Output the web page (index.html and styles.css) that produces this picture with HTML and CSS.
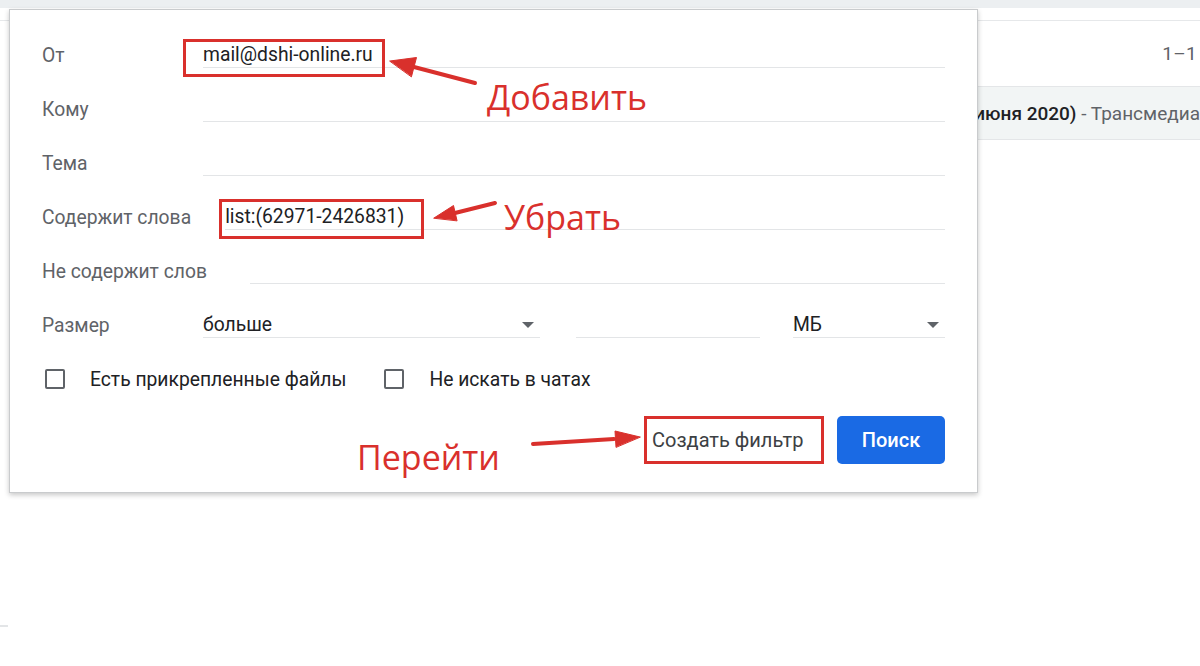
FILE: index.html
```html
<!DOCTYPE html>
<html lang="ru">
<head>
<meta charset="utf-8">
<title>Поиск</title>
<link rel="stylesheet" href="styles.css">
</head>
<body>
<div class="page">
  <div class="topstrip"></div>
  <div class="toolbar"></div>
  <div class="count-row"><span class="count">1–1</span></div>
  <div class="mail-row">
    <span class="mail-subject">июня 2020)</span><span class="mail-snippet">&nbsp;- Трансмедиа</span>
  </div>
  <div class="side-mark"></div>
</div>

<form class="search-dialog">
  <div class="row">
    <span class="label">От</span>
    <div class="field"><span class="value">mail@dshi-online.ru</span></div>
  </div>
  <div class="row">
    <span class="label">Кому</span>
    <div class="field"></div>
  </div>
  <div class="row">
    <span class="label">Тема</span>
    <div class="field"></div>
  </div>
  <div class="row">
    <span class="label label-mid">Содержит слова</span>
    <div class="field"><span class="value">list:(62971-2426831)</span></div>
  </div>
  <div class="row">
    <span class="label label-wide">Не содержит слов</span>
    <div class="field"></div>
  </div>
  <div class="row">
    <span class="label">Размер</span>
    <div class="field select select-op"><span class="value">больше</span><span class="caret"></span></div>
    <div class="field field-num"></div>
    <div class="field select select-unit"><span class="value">МБ</span><span class="caret"></span></div>
  </div>
  <div class="row row-checks">
    <label class="check"><span class="box"></span><span class="check-text">Есть прикрепленные файлы</span></label>
    <label class="check"><span class="box"></span><span class="check-text">Не искать в чатах</span></label>
  </div>
  <div class="actions">
    <button type="button" class="btn btn-text">Создать фильтр</button>
    <button type="button" class="btn btn-primary">Поиск</button>
  </div>
</form>

<div class="mark mark-from"></div>
<div class="mark mark-words"></div>
<div class="mark mark-filter"></div>

<span class="note note-add">Добавить</span>
<span class="note note-remove">Убрать</span>
<span class="note note-go">Перейти</span>

<svg class="arrows" width="1200" height="666" viewBox="0 0 1200 666">
  <g fill="#d9302c" stroke="#d9302c" stroke-linecap="round">
    <line x1="475" y1="83" x2="414" y2="67" stroke-width="4"/>
    <polygon points="390,61 416.5,57.5 411.5,76.5" stroke-width="1"/>
    <line x1="495" y1="203" x2="455" y2="213" stroke-width="4"/>
    <polygon points="434,218 453.5,205.5 457,220.5" stroke-width="1"/>
    <line x1="533" y1="444" x2="614" y2="439" stroke-width="4"/>
    <polygon points="640,437 615,431 616,447" stroke-width="1"/>
  </g>
</svg>
</body>
</html>
```

FILE: styles.css
```css
html, body {
  margin: 0;
  padding: 0;
  background: #ffffff;
}

body {
  width: 1200px;
  height: 666px;
  overflow: hidden;
  position: relative;
  font-family: Roboto, "Liberation Sans", sans-serif;
}

/* background page */
.page {
  display: flex;
  flex-direction: column;
}

.topstrip {
  height: 8px;
  background: #eceff1;
}

.toolbar {
  height: 12px;
  border-bottom: 1px solid #e6e8ea;
}

.count-row {
  height: 65px;
  display: flex;
  align-items: center;
  justify-content: flex-end;
}

.count {
  font-size: 19px;
  color: #5f6368;
  margin-right: 3px;
  letter-spacing: 0.3px;
}

.mail-row {
  height: 52px;
  margin-left: 978px;
  background: #f2f5f5;
  border-top: 1px solid #e4e6e8;
  border-bottom: 1px solid #e4e6e8;
  display: flex;
  align-items: center;
  justify-content: flex-end;
  white-space: nowrap;
  overflow: hidden;
  font-size: 19px;
}

.mail-subject {
  color: #202124;
  font-weight: 500;
  flex: none;
}

.mail-snippet {
  color: #5f6368;
  flex: none;
  margin-right: 0;
}

.side-mark {
  margin-top: 485px;
  width: 8px;
  height: 2px;
  background: #e3e5e7;
}

/* search dialog */
.search-dialog {
  position: absolute;
  left: 9px;
  top: 9px;
  width: 969px;
  box-sizing: border-box;
  background: #ffffff;
  border: 1px solid #c9cbcd;
  box-shadow: 0 2px 5px rgba(0, 0, 0, 0.22);
  padding: 18px 32px 28px 32px;
  margin: 0;
  display: flex;
  flex-direction: column;
}

.row {
  height: 54px;
  display: flex;
  align-items: center;
}

.label {
  flex: none;
  min-width: 161px;
  box-sizing: border-box;
  padding-right: 32px;
  font-size: 19.3px;
  color: #5f6368;
  white-space: nowrap;
}

.label-mid {
  padding-right: 34px;
}

.label-wide {
  padding-right: 43px;
}

.field {
  flex: 1;
  height: 24px;
  border-bottom: 1px solid #e3e5e7;
  display: flex;
  align-items: center;
  font-size: 19.3px;
  color: #202124;
  white-space: nowrap;
}

.value {
  line-height: 24px;
}

.select {
  justify-content: space-between;
}

.select-op {
  flex: none;
  width: 337px;
}

.field-num {
  flex: none;
  width: 184px;
  margin-left: 36px;
}

.select-unit {
  margin-left: 33px;
}

.caret {
  width: 0;
  height: 0;
  border-left: 6px solid transparent;
  border-right: 6px solid transparent;
  border-top: 6px solid #5f6368;
  margin-right: 6px;
}

.row-checks {
  gap: 35px;
}

.check {
  display: flex;
  align-items: center;
  font-size: 19.3px;
  color: #202124;
  white-space: nowrap;
}

.box {
  width: 16px;
  height: 16px;
  border: 2px solid #5f6368;
  border-radius: 2px;
  margin-left: 3px;
  margin-right: 25px;
}

.actions {
  margin-top: 10px;
  display: flex;
  justify-content: flex-end;
  gap: 16px;
}

.btn {
  height: 48px;
  border: none;
  border-radius: 5px;
  font-family: Roboto, "Liberation Sans", sans-serif;
  font-size: 20px;
  cursor: pointer;
}

.btn-text {
  background: #ffffff;
  color: #3c4043;
  width: 178px;
  padding: 0 0 0 9px;
  text-align: left;
}

.btn-primary {
  background: #1a6ae4;
  color: #ffffff;
  font-weight: 500;
  width: 108px;
}

/* annotations */
.mark {
  position: absolute;
  border: 3px solid #d9302c;
  box-sizing: border-box;
}

.mark-from {
  left: 183px;
  top: 39px;
  width: 202px;
  height: 38px;
}

.mark-words {
  left: 219px;
  top: 199px;
  width: 205px;
  height: 40px;
}

.mark-filter {
  left: 644px;
  top: 416px;
  width: 180px;
  height: 48px;
}

.note {
  position: absolute;
  font-family: "Open Sans", "Liberation Sans", sans-serif;
  font-size: 34px;
  line-height: 40px;
  color: #d9302c;
  white-space: nowrap;
}

.note-add {
  left: 487px;
  top: 77px;
}

.note-remove {
  left: 504px;
  top: 197px;
}

.note-go {
  left: 357px;
  top: 437px;
}

.arrows {
  position: absolute;
  left: 0;
  top: 0;
  pointer-events: none;
}
```
